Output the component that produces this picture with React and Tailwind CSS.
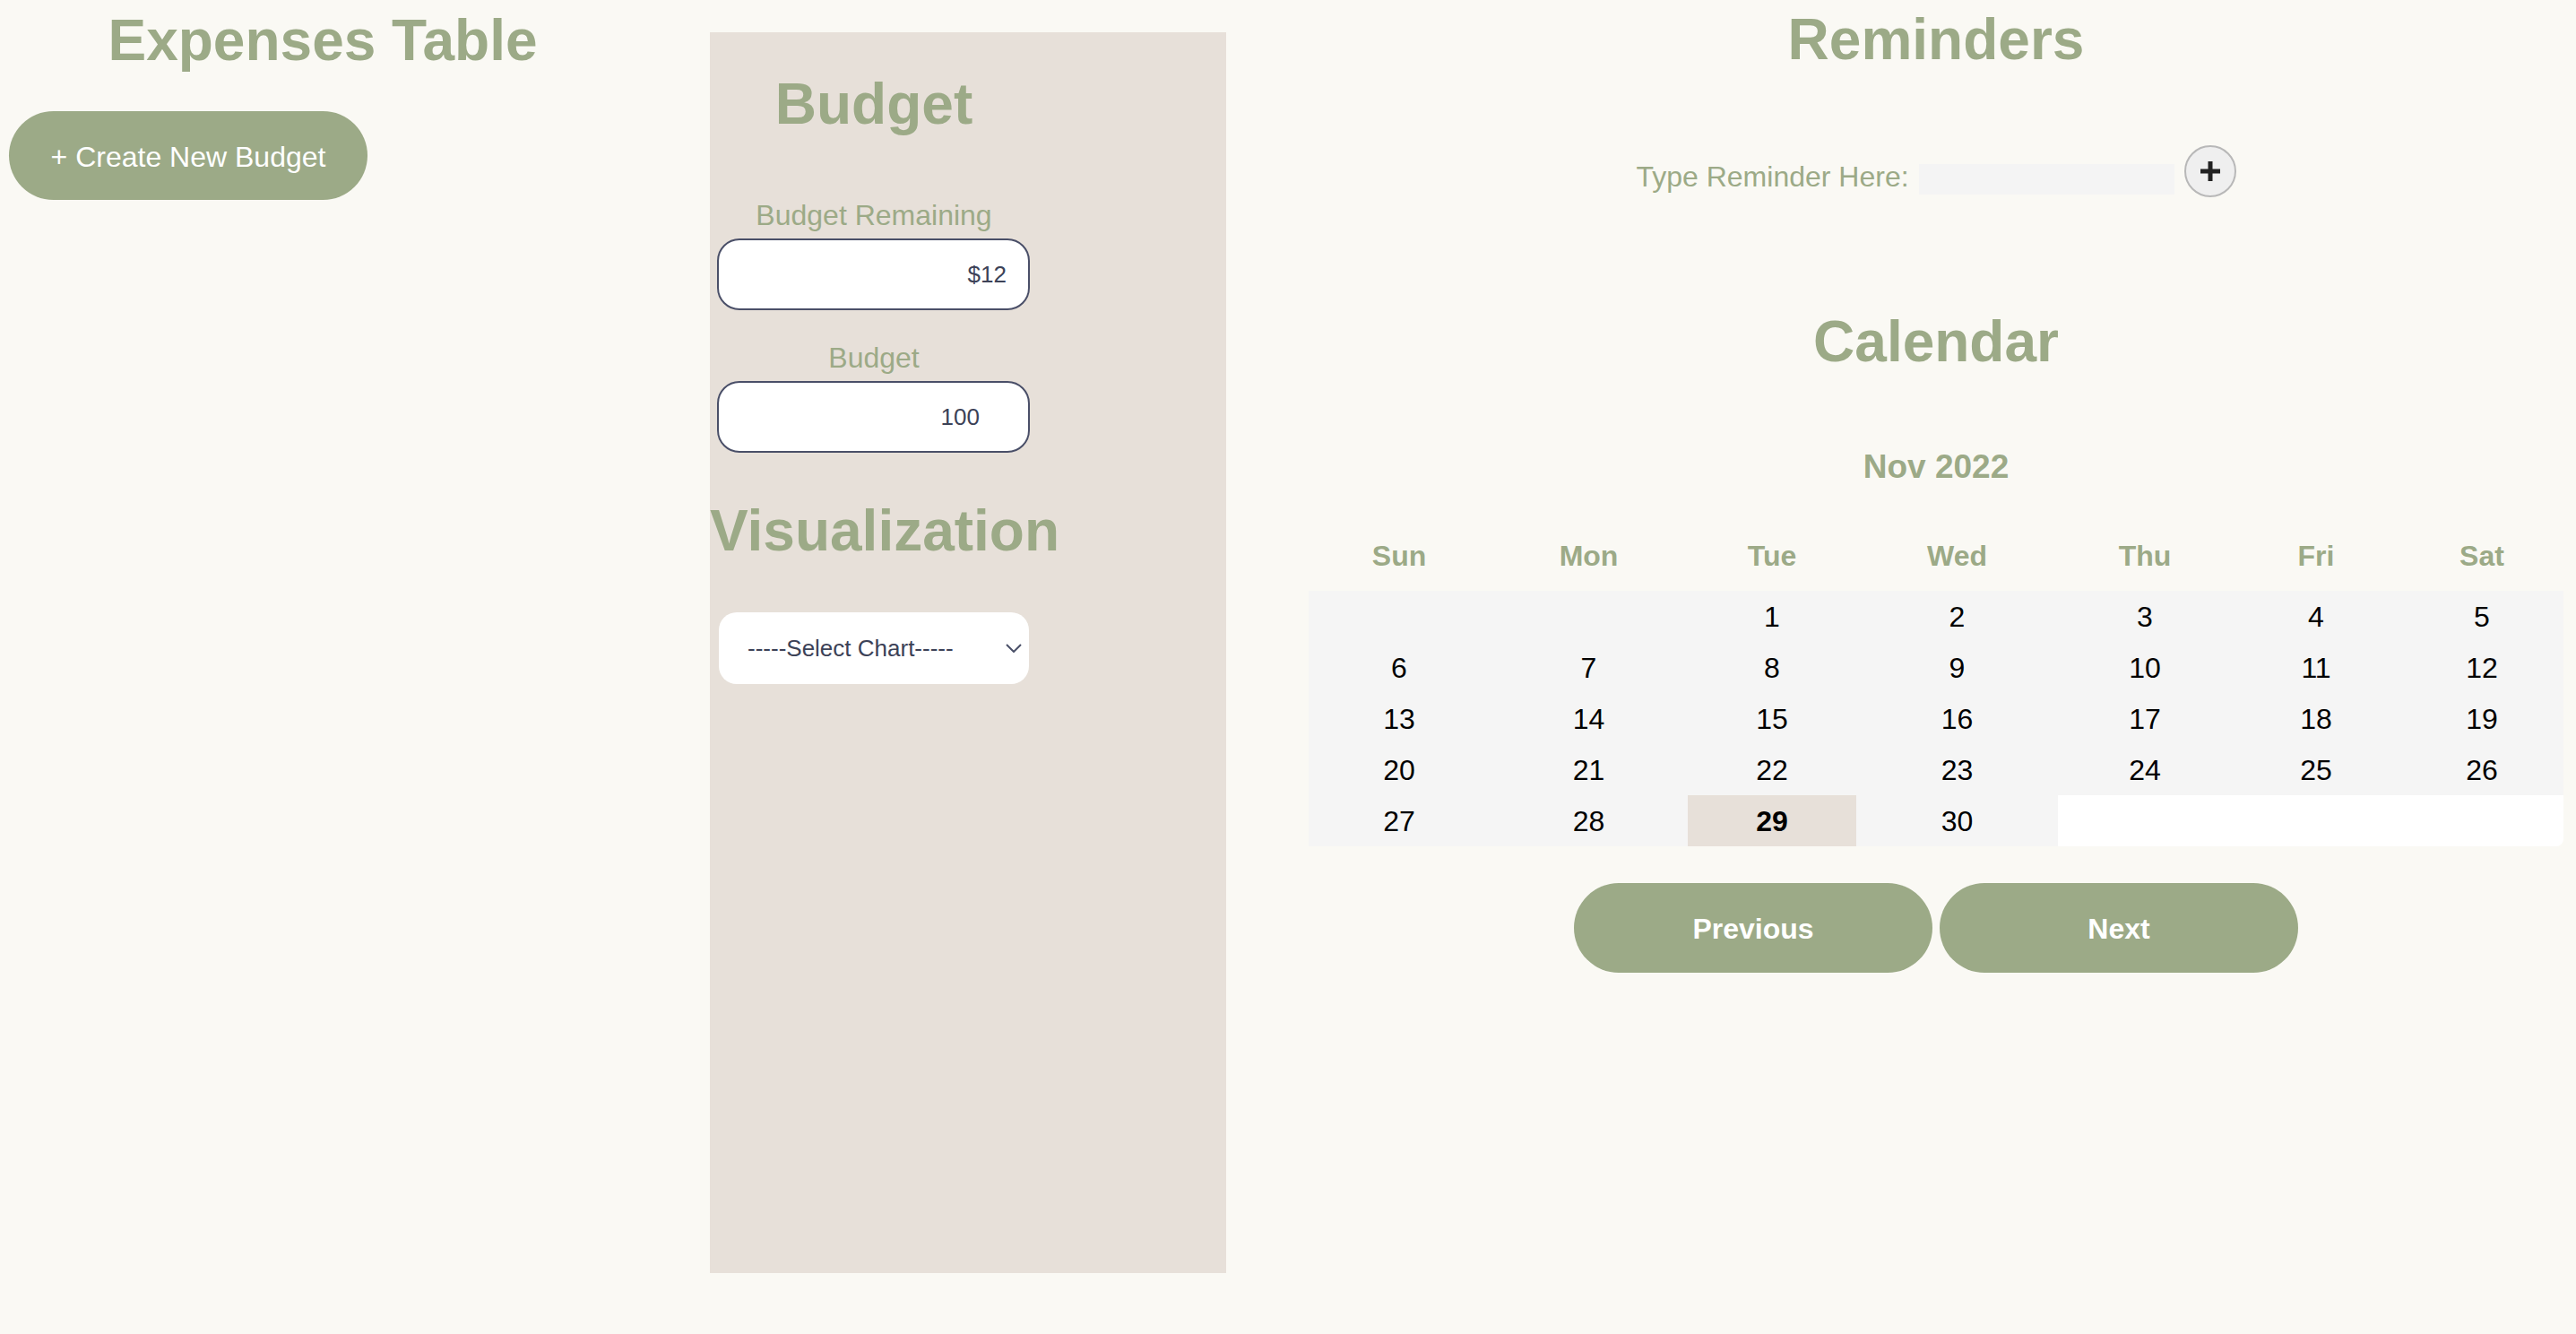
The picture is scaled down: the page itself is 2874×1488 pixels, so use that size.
const weekdays = ['Sun', 'Mon', 'Tue', 'Wed', 'Thu', 'Fri', 'Sat'];

function buildCells() {
  const cells = [];
  for (let i = 0; i < 2; i++) cells.push({ day: null, blank: false });
  for (let d = 1; d <= 30; d++) cells.push({ day: d, blank: false });
  for (let i = 0; i < 3; i++) cells.push({ day: null, blank: true });
  return cells;
}

function Calendar() {
  const cells = buildCells();
  return (
    <div className="flex flex-col items-center">
      <h2 className="mt-[89px] text-[37px] leading-[37px] font-bold text-[#9caa87]">Nov 2022</h2>
      <div className="mt-[65px] grid grid-cols-[202px_221px_188px_225px_194px_188px_182px] h-[32px]">
        {weekdays.map((w) => (
          <div key={w} className="text-center text-[32px] leading-[32px] font-bold text-[#9caa87]">
            {w}
          </div>
        ))}
      </div>
      <div className="mt-[23px] grid grid-cols-[202px_221px_188px_225px_194px_188px_182px]">
        {cells.map((c, i) => {
          const today = c.day === 29;
          let bg = 'bg-[#f5f5f5]';
          if (c.blank) bg = 'bg-white';
          if (today) bg = 'bg-[#e7e0d9]';
          return (
            <div
              key={i}
              className={`h-[57px] flex items-center justify-center text-[32px] leading-none text-black ${bg} ${
                today ? 'font-bold' : ''
              } ${i === cells.length - 1 ? 'rounded-br-[8px]' : ''}`}
            >
              {c.day}
            </div>
          );
        })}
      </div>
    </div>
  );
}

export default function App() {
  return (
    <div className="min-h-screen w-full bg-[#faf9f4] font-['Liberation_Sans',Arial,sans-serif] flex items-start overflow-hidden">
      {/* expenses */}
      <div className="w-[720px] shrink-0 flex flex-col">
        <h1 className="mt-[13px] text-center text-[64px] leading-[64px] font-bold text-[#9caa87]">
          Expenses Table
        </h1>
        <button className="ml-[10px] mt-[47px] w-[400px] h-[99px] rounded-full bg-[#9caa87] text-white text-[32px] leading-none pt-[2px]">
          + Create New Budget
        </button>
      </div>

      {/* budget panel */}
      <div className="ml-[72px] mt-[36px] w-[576px] h-[1384px] shrink-0 bg-[#e7e0d9]">
        <div className="w-[366px] text-center">
          <h2 className="mt-[48px] text-[64px] leading-[64px] font-bold text-[#9caa87]">Budget</h2>
          <div className="mt-[76px] text-[32px] leading-[32px] text-[#9caa87]">Budget Remaining</div>
          <input
            readOnly
            value="$12"
            className="block mt-[10px] ml-[8px] w-[349px] h-[80px] border-2 border-[#4a4f68] rounded-[25px] bg-white text-right pr-[24px] text-[26px] text-[#3c4257] outline-none"
          />
          <div className="mt-[37px] text-[32px] leading-[32px] text-[#9caa87]">Budget</div>
          <input
            readOnly
            value="100"
            className="block mt-[10px] ml-[8px] w-[349px] h-[80px] border-2 border-[#4a4f68] rounded-[25px] bg-white text-right pr-[54px] text-[26px] text-[#3c4257] outline-none"
          />
          <h2 className="mt-[55px] text-[64px] leading-[64px] font-bold text-[#9caa87] whitespace-nowrap">
            Visualization
          </h2>
          <div className="mt-[59px] ml-[10px] w-[346px] h-[80px] rounded-[20px] bg-white flex items-center pl-[32px] pr-[8px] text-[26px] text-[#3c4257]">
            <span className="flex-1 text-left">-----Select Chart-----</span>
            <svg width="18" height="10" viewBox="0 0 18 10" fill="none">
              <path d="M1 1l8 8 8-8" stroke="#4a5068" strokeWidth="2" />
            </svg>
          </div>
        </div>
      </div>

      {/* reminders + calendar */}
      <div className="ml-[87px] w-[1410px] shrink-0 flex flex-col items-center">
        <h1 className="mt-[12px] text-[64px] leading-[64px] font-bold text-[#9caa87]">Reminders</h1>
        <div className="mt-[86px] flex items-start gap-[11px]">
          <span className="mt-[19px] text-[32px] leading-[32px] text-[#9caa87]">Type Reminder Here:</span>
          <input className="mt-[21px] w-[285px] h-[34px] bg-[#f4f4f4] outline-none" />
          <button className="w-[58px] h-[58px] rounded-full border-2 border-[#b8b8b8] bg-[#efefef] flex items-center justify-center">
            <svg width="24" height="24" viewBox="0 0 24 24">
              <path d="M12 1v22M1 12h22" stroke="#222" strokeWidth="5" />
            </svg>
          </button>
        </div>
        <h1 className="mt-[129px] text-[64px] leading-[64px] font-bold text-[#9caa87]">Calendar</h1>
        <Calendar />
        <div className="mt-[41px] flex gap-[8px]">
          <button className="w-[400px] h-[100px] rounded-full bg-[#9caa87] text-white text-[32px] font-bold pt-[2px]">
            Previous
          </button>
          <button className="w-[400px] h-[100px] rounded-full bg-[#9caa87] text-white text-[32px] font-bold pt-[2px]">
            Next
          </button>
        </div>
      </div>
    </div>
  );
}
